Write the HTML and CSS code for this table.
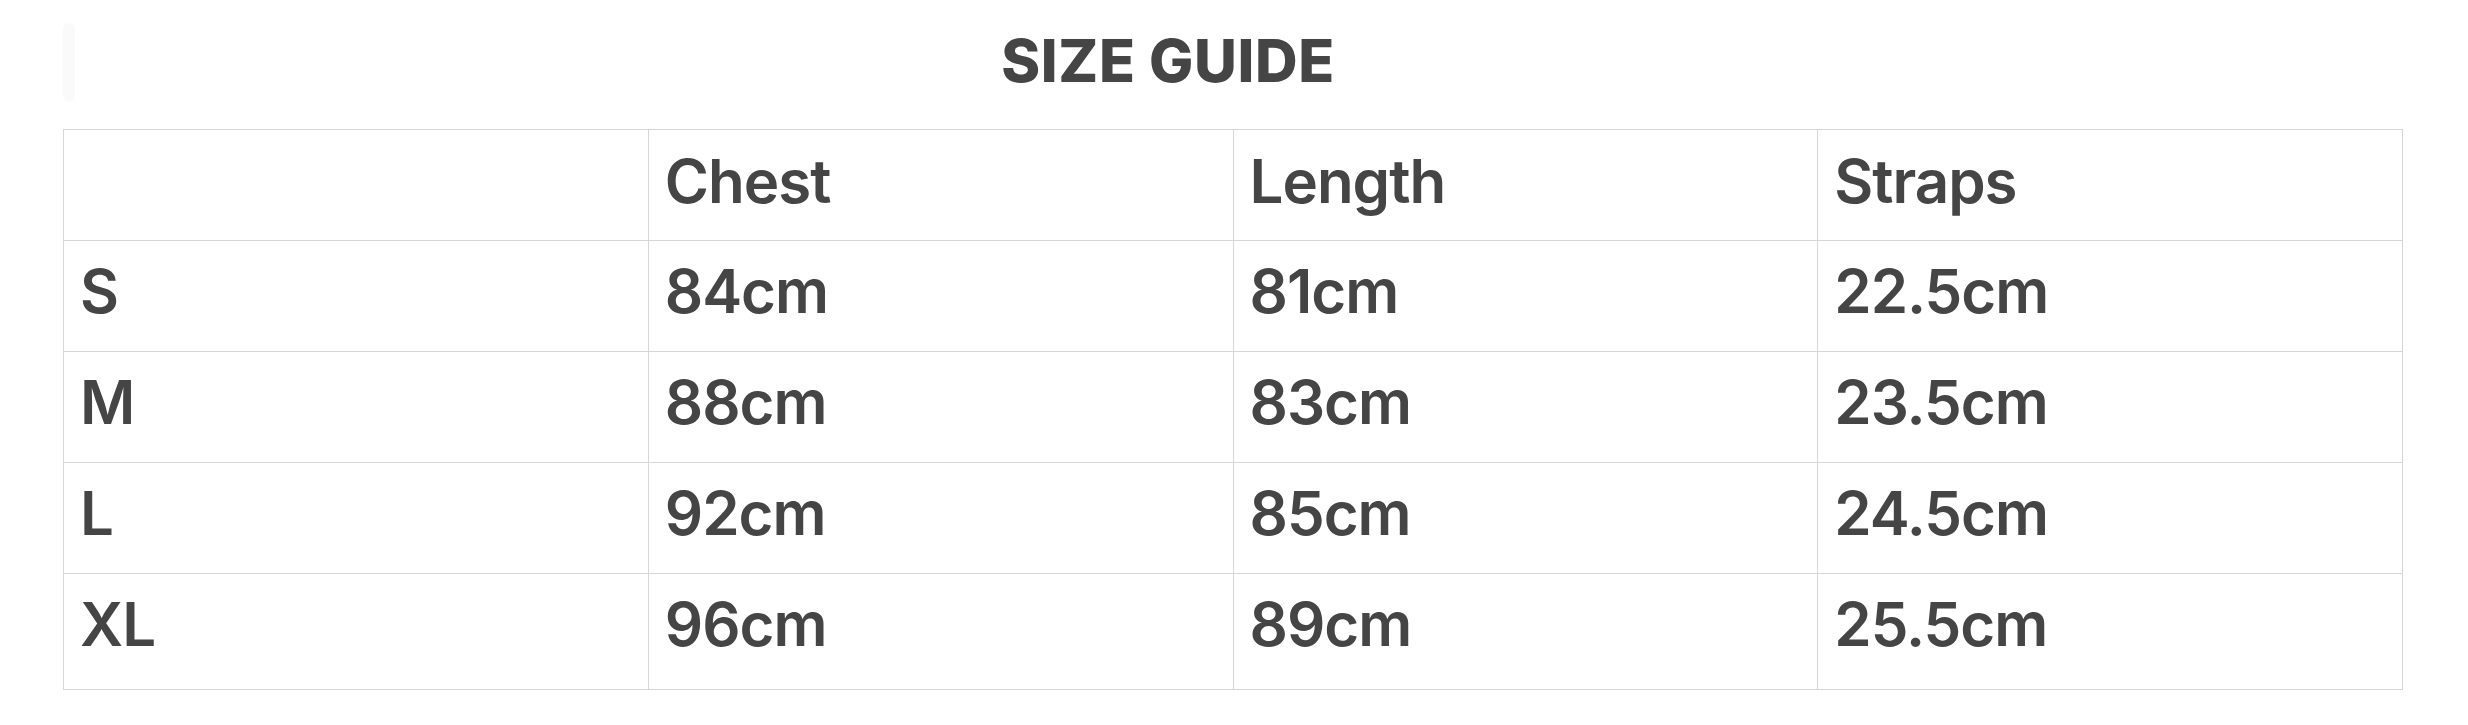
FILE: index.html
```html
<!DOCTYPE html>
<html lang="en">
<head>
<meta charset="utf-8">
<title>Size Guide</title>
<link rel="stylesheet" href="styles.css">
</head>
<body>
<div class="page">
  <div class="header">
    <div class="ghost"></div>
    <h1 class="title">SIZE GUIDE</h1>
  </div>
  <table class="sizes">
    <tr class="head-row">
      <td></td><td>Chest</td><td>Length</td><td>Straps</td>
    </tr>
    <tr><td>S</td><td>84cm</td><td>81cm</td><td>22.5cm</td></tr>
    <tr><td>M</td><td>88cm</td><td>83cm</td><td>23.5cm</td></tr>
    <tr><td>L</td><td>92cm</td><td>85cm</td><td>24.5cm</td></tr>
    <tr class="last-row"><td>XL</td><td>96cm</td><td>89cm</td><td>25.5cm</td></tr>
  </table>
</div>
</body>
</html>
```
FILE: styles.css
```css
html, body {
  margin: 0;
  padding: 0;
  background: #ffffff;
}
.page {
  padding-left: 63px;
  font-family: Inter, "Liberation Sans", sans-serif;
  color: #454545;
}
.header {
  position: relative;
  width: 2340px;
  height: 129px;
  box-sizing: border-box;
  padding-right: 130px;
}
.ghost {
  position: absolute;
  left: 0;
  top: 23px;
  width: 12px;
  height: 79px;
  border-radius: 6px;
  background: #fafafa;
}
.title {
  margin: 0;
  padding-top: 25px;
  text-align: center;
  font-size: 59px;
  line-height: 72px;
  font-weight: 800;
  letter-spacing: 0.6px;
}
.sizes {
  width: 2340px;
  table-layout: fixed;
  border-collapse: collapse;
}
.sizes td {
  border: 1px solid #d6d6d6;
  padding: 14px 16px 24px 16px;
  height: 72px;
  font-size: 60px;
  line-height: 72px;
  font-weight: 600;
  vertical-align: top;
  letter-spacing: -1px;
}
.sizes .head-row td {
  padding-top: 15px;
  padding-bottom: 23px;
}
.sizes .last-row td {
  padding-bottom: 29px;
}
```
